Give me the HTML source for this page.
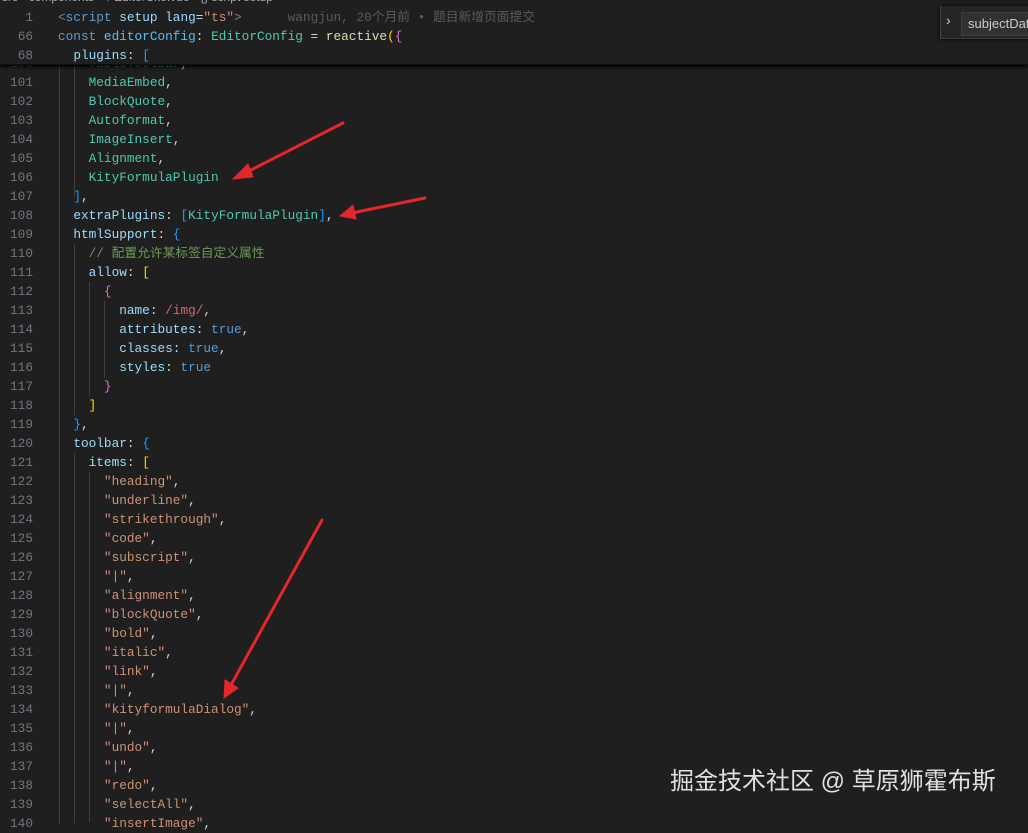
<!DOCTYPE html>
<html><head><meta charset="utf-8"><style>
body{margin:0;width:1028px;height:820px;background:#1f1f1f;overflow:hidden;position:relative;font-family:"Liberation Mono","Noto Sans CJK SC",monospace;font-size:12.75px;}
.l{position:absolute;left:0;height:19px;line-height:19px;white-space:pre;color:#d4d4d4;}
.n{position:absolute;left:0;width:33px;text-align:right;color:#6e7681;}
.c{position:absolute;left:58px;}
.P{color:#9cdcfe}.C{color:#4ec9b0}.S{color:#ce9178}.K{color:#569cd6}.Y{color:#ffd700}.M{color:#da70d6}.B{color:#179fff}.G{color:#6a9955}.R{color:#d16969}.F{color:#dcdcaa}
.g{position:absolute;width:1px;background:#404040;}
#sticky{position:absolute;left:0;top:0;width:1028px;height:64px;background:#1f1f1f;box-shadow:0 2px 3px #000;border-bottom:1px solid #111;}
</style></head><body>
<div class="g" style="left:59px;top:64px;height:760px"></div>
<div class="g" style="left:74px;top:64px;height:133px"></div>
<div class="g" style="left:74px;top:244px;height:171px"></div>
<div class="g" style="left:89px;top:282px;height:114px"></div>
<div class="g" style="left:104px;top:301px;height:76px"></div>
<div class="g" style="left:74px;top:453px;height:370px"></div>
<div class="g" style="left:89px;top:472px;height:350px"></div>

<div class="l" style="top:53.5px"><span class="n">100</span><span class="c">    <span class="C">TableToolbar</span>,</span></div>
<div class="l" style="top:72.5px"><span class="n">101</span><span class="c">    <span class="C">MediaEmbed</span>,</span></div>
<div class="l" style="top:91.5px"><span class="n">102</span><span class="c">    <span class="C">BlockQuote</span>,</span></div>
<div class="l" style="top:110.5px"><span class="n">103</span><span class="c">    <span class="C">Autoformat</span>,</span></div>
<div class="l" style="top:129.5px"><span class="n">104</span><span class="c">    <span class="C">ImageInsert</span>,</span></div>
<div class="l" style="top:148.5px"><span class="n">105</span><span class="c">    <span class="C">Alignment</span>,</span></div>
<div class="l" style="top:167.5px"><span class="n">106</span><span class="c">    <span class="C">KityFormulaPlugin</span></span></div>
<div class="l" style="top:186.5px"><span class="n">107</span><span class="c">  <span class="B">]</span>,</span></div>
<div class="l" style="top:205.5px"><span class="n">108</span><span class="c">  <span class="P">extraPlugins</span>: <span class="B">[</span><span class="C">KityFormulaPlugin</span><span class="B">]</span>,</span></div>
<div class="l" style="top:224.5px"><span class="n">109</span><span class="c">  <span class="P">htmlSupport</span>: <span class="B">{</span></span></div>
<div class="l" style="top:243.5px"><span class="n">110</span><span class="c">    <span class="G">// 配置允许某标签自定义属性</span></span></div>
<div class="l" style="top:262.5px"><span class="n">111</span><span class="c">    <span class="P">allow</span>: <span class="Y">[</span></span></div>
<div class="l" style="top:281.5px"><span class="n">112</span><span class="c">      <span class="M">{</span></span></div>
<div class="l" style="top:300.5px"><span class="n">113</span><span class="c">        <span class="P">name</span>: <span class="R">/img/</span>,</span></div>
<div class="l" style="top:319.5px"><span class="n">114</span><span class="c">        <span class="P">attributes</span>: <span class="K">true</span>,</span></div>
<div class="l" style="top:338.5px"><span class="n">115</span><span class="c">        <span class="P">classes</span>: <span class="K">true</span>,</span></div>
<div class="l" style="top:357.5px"><span class="n">116</span><span class="c">        <span class="P">styles</span>: <span class="K">true</span></span></div>
<div class="l" style="top:376.5px"><span class="n">117</span><span class="c">      <span class="M">}</span></span></div>
<div class="l" style="top:395.5px"><span class="n">118</span><span class="c">    <span class="Y">]</span></span></div>
<div class="l" style="top:414.5px"><span class="n">119</span><span class="c">  <span class="B">}</span>,</span></div>
<div class="l" style="top:433.5px"><span class="n">120</span><span class="c">  <span class="P">toolbar</span>: <span class="B">{</span></span></div>
<div class="l" style="top:452.5px"><span class="n">121</span><span class="c">    <span class="P">items</span>: <span class="Y">[</span></span></div>
<div class="l" style="top:471.5px"><span class="n">122</span><span class="c">      <span class="S">"heading"</span>,</span></div>
<div class="l" style="top:490.5px"><span class="n">123</span><span class="c">      <span class="S">"underline"</span>,</span></div>
<div class="l" style="top:509.5px"><span class="n">124</span><span class="c">      <span class="S">"strikethrough"</span>,</span></div>
<div class="l" style="top:528.5px"><span class="n">125</span><span class="c">      <span class="S">"code"</span>,</span></div>
<div class="l" style="top:547.5px"><span class="n">126</span><span class="c">      <span class="S">"subscript"</span>,</span></div>
<div class="l" style="top:566.5px"><span class="n">127</span><span class="c">      <span class="S">"|"</span>,</span></div>
<div class="l" style="top:585.5px"><span class="n">128</span><span class="c">      <span class="S">"alignment"</span>,</span></div>
<div class="l" style="top:604.5px"><span class="n">129</span><span class="c">      <span class="S">"blockQuote"</span>,</span></div>
<div class="l" style="top:623.5px"><span class="n">130</span><span class="c">      <span class="S">"bold"</span>,</span></div>
<div class="l" style="top:642.5px"><span class="n">131</span><span class="c">      <span class="S">"italic"</span>,</span></div>
<div class="l" style="top:661.5px"><span class="n">132</span><span class="c">      <span class="S">"link"</span>,</span></div>
<div class="l" style="top:680.5px"><span class="n">133</span><span class="c">      <span class="S">"|"</span>,</span></div>
<div class="l" style="top:699.5px"><span class="n">134</span><span class="c">      <span class="S">"kityformulaDialog"</span>,</span></div>
<div class="l" style="top:718.5px"><span class="n">135</span><span class="c">      <span class="S">"|"</span>,</span></div>
<div class="l" style="top:737.5px"><span class="n">136</span><span class="c">      <span class="S">"undo"</span>,</span></div>
<div class="l" style="top:756.5px"><span class="n">137</span><span class="c">      <span class="S">"|"</span>,</span></div>
<div class="l" style="top:775.5px"><span class="n">138</span><span class="c">      <span class="S">"redo"</span>,</span></div>
<div class="l" style="top:794.5px"><span class="n">139</span><span class="c">      <span class="S">"selectAll"</span>,</span></div>
<div class="l" style="top:813.5px"><span class="n">140</span><span class="c">      <span class="S">"insertImage"</span>,</span></div>

<div id="sticky">
<div class="l" style="top:-12px;color:#aaa;font-family:'Liberation Sans',sans-serif;font-size:12px;left:2px">src › components › ♦ EditorCke.vue › {} script setup</div>
<div class="l" style="top:7.5px"><span class="n">1</span><span class="c"><span style="color:#808080">&lt;</span><span class="K">script</span> <span class="P">setup</span> <span class="P">lang</span>=<span class="S">"ts"</span><span style="color:#808080">&gt;</span>      <span style="color:#5a5a5a">wangjun, 20个月前 • 题目新增页面提交</span></span></div>
<div class="l" style="top:26.5px"><span class="n">66</span><span class="c"><span class="K">const</span> <span class="P" style="color:#4fc1ff">editorConfig</span>: <span class="C">EditorConfig</span> = <span class="F">reactive</span><span class="Y">(</span><span class="M">{</span></span></div>
<div class="l" style="top:45.5px"><span class="n">68</span><span class="c">  <span class="P">plugins</span>: <span class="B">[</span></span></div>
<div style="position:absolute;left:940px;top:6px;width:100px;height:32px;background:#252526;border-left:1px solid #444;border-bottom:1px solid #3a3a3a;box-shadow:0 0 4px #000"></div>
<div style="position:absolute;left:946px;top:12px;color:#ccc;font-family:'Liberation Sans',sans-serif;font-size:14px">›</div>
<div style="position:absolute;left:961px;top:12px;width:80px;height:22px;background:#313131;border:1px solid #3c3c3c;color:#ccc;font-family:'Liberation Sans',sans-serif;font-size:13px;line-height:22px;padding-left:6px">subjectDat</div>
</div>

<svg style="position:absolute;left:0;top:0" width="1028" height="820">
<g stroke="#e5262b" stroke-width="3" fill="#e5262b" stroke-linecap="round">
<line x1="343" y1="123" x2="245" y2="173"/><polygon points="233,179 248,164 253,177" stroke-width="1"/>
<line x1="425" y1="198" x2="352" y2="213"/><polygon points="340,216 353,205 356,219" stroke-width="1"/>
<line x1="322" y1="520" x2="231" y2="685"/><polygon points="224,698 225,680 238,688" stroke-width="1"/>
</g></svg>
<div style="position:absolute;left:670px;top:767px;color:#e0e0e0;font-family:'Liberation Sans','Noto Sans CJK SC',sans-serif;font-size:24px;line-height:30px;white-space:nowrap">掘金技术社区 @ 草原狮霍布斯</div>
</body></html>
